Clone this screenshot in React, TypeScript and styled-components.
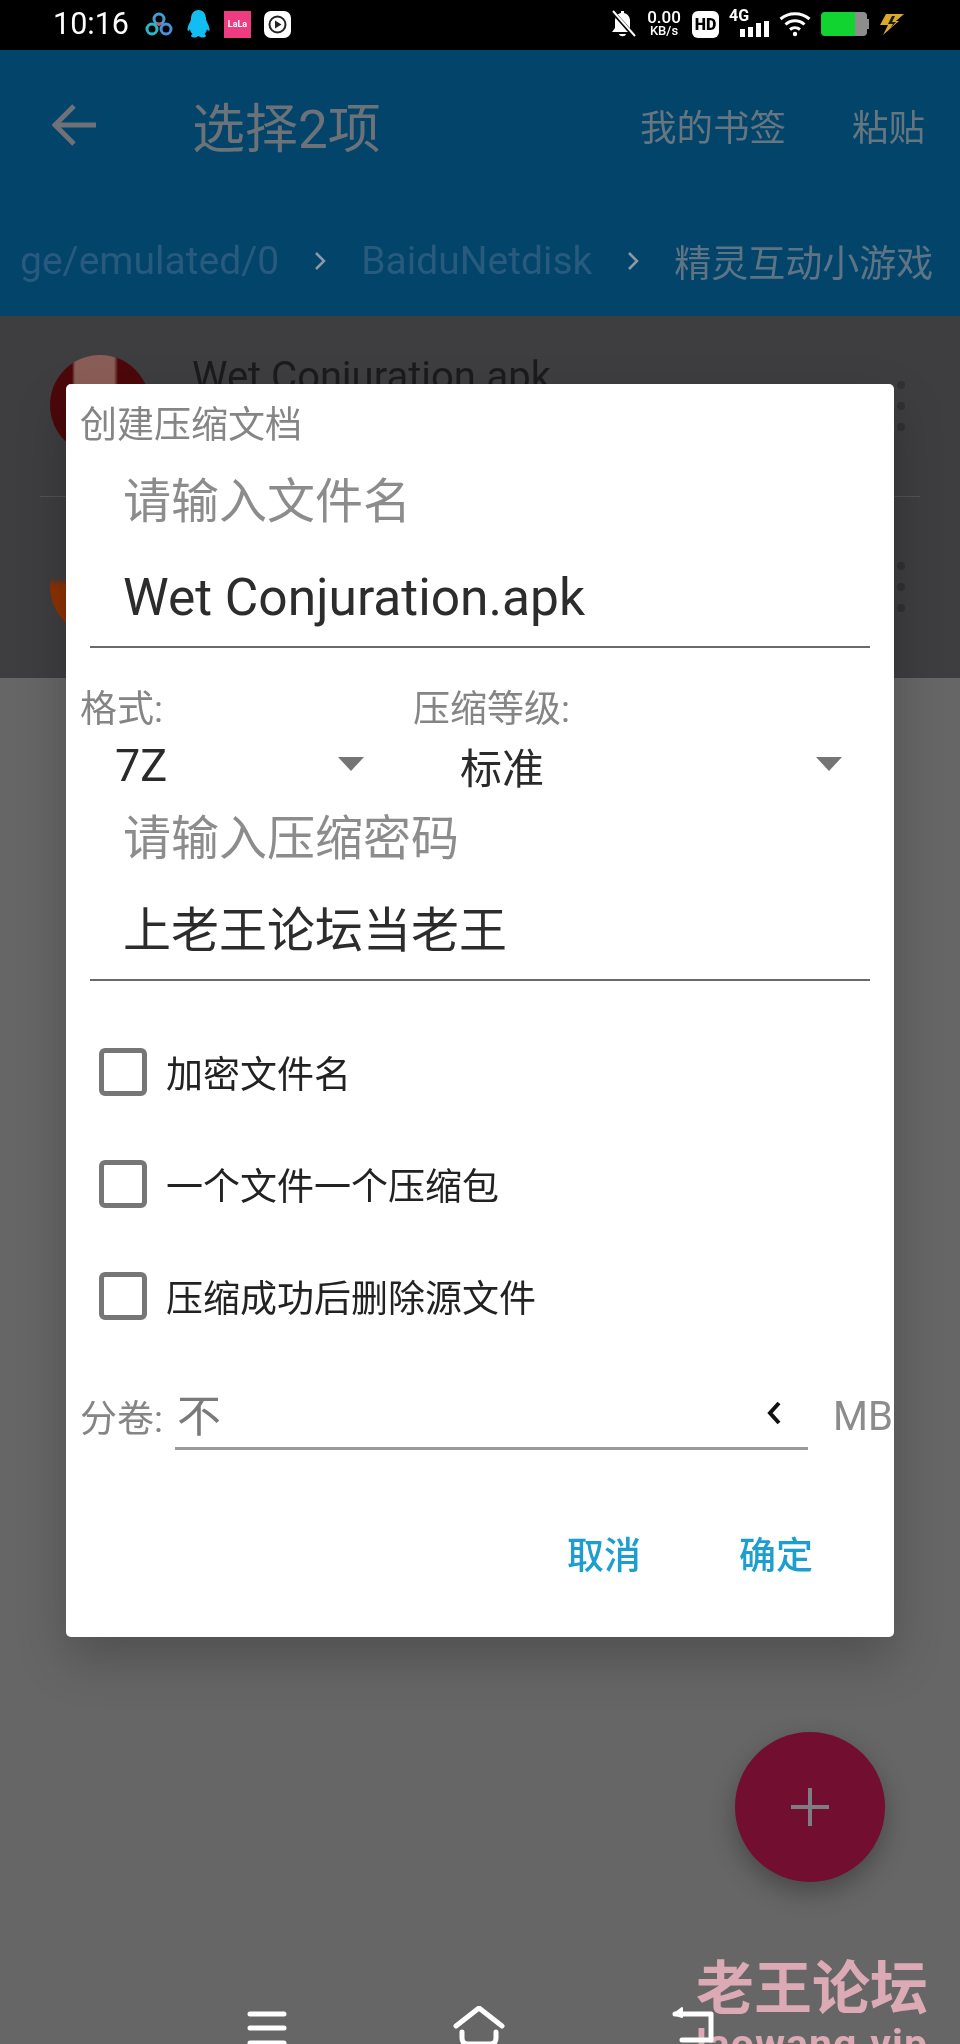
import React from 'react';
import styled, { createGlobalStyle } from 'styled-components';

const FONT = 'Roboto, "Noto Sans CJK SC", sans-serif';

const GlobalStyle = createGlobalStyle`
  html, body {
    margin: 0;
    padding: 0;
    background: #666667;
  }
  * {
    box-sizing: border-box;
  }
`;

// the source is a soft video frame, hence the small blur
const Page = styled.div`
  position: relative;
  width: 960px;
  height: 2044px;
  overflow: hidden;
  background: #666667;
  font-family: ${FONT};
  display: flex;
  flex-direction: column;
  filter: blur(0.5px);
`;

/* status bar */

const StatusBarRow = styled.div`
  height: 50px;
  background: #000;
  color: #fff;
  display: flex;
  align-items: center;
  padding: 0 0 2px 53px;
`;

const Clock = styled.span`
  font-size: 30.5px;
  line-height: 34px;
  width: 92px;
`;

const LeftIcons = styled.div`
  display: flex;
  align-items: center;
  gap: 13px;
`;

const RightIcons = styled.div`
  margin-left: auto;
  margin-right: 55px;
  display: flex;
  align-items: center;
  gap: 10px;
`;

const LalaTile = styled.span`
  width: 27px;
  height: 27px;
  background: #ef3b80;
  color: #fff;
  font-size: 9px;
  font-weight: 700;
  display: flex;
  align-items: center;
  justify-content: center;
`;

const NetSpeed = styled.span`
  width: 36px;
  display: flex;
  flex-direction: column;
  align-items: center;
  font-weight: 500;
  line-height: 14px;
  font-size: 17px;
  small {
    font-size: 13px;
  }
`;

const HdTile = styled.span`
  width: 27px;
  height: 27px;
  border-radius: 6px;
  background: #fff;
  color: #000;
  font-size: 16px;
  font-weight: 900;
  display: flex;
  align-items: center;
  justify-content: center;
`;

const SignalBox = styled.span`
  width: 40px;
  height: 30px;
  display: flex;
  flex-direction: column;
  font-size: 16px;
  font-weight: 700;
  line-height: 14px;
`;

const SignalBars = styled.span`
  align-self: flex-end;
  display: flex;
  align-items: flex-end;
  gap: 3px;
  margin-top: -2px;
`;

const SignalBar = styled.i<{ $h: number }>`
  display: block;
  width: 5px;
  height: ${p => p.$h}px;
  background: #fff;
`;

const Battery = styled.span`
  width: 46px;
  height: 24px;
  border-radius: 4px;
  background: linear-gradient(to right, #12d431 0 74%, #8d8d8d 74% 100%);
`;

const BatteryTip = styled.span`
  width: 2px;
  height: 10px;
  margin-left: -10px;
  background: #8d8d8d;
`;

/* app bar */

const AppBar = styled.div`
  height: 266px;
  background: #03446b;
  display: flex;
  flex-direction: column;
`;

const ToolRow = styled.div`
  height: 150px;
  padding: 0 35px 0 52px;
  display: flex;
  align-items: center;
`;

const ToolTitle = styled.span`
  margin-left: 96px;
  font-size: 53px;
  color: #6d7278;
`;

const ToolAction = styled.span<{ $first?: boolean }>`
  margin-left: ${p => (p.$first ? 'auto' : '66px')};
  font-size: 36.5px;
  color: #66767f;
`;

const Crumbs = styled.div`
  height: 62px;
  margin-top: 30px;
  padding-left: 20px;
  display: flex;
  align-items: center;
  white-space: nowrap;
  font-size: 39px;
`;

const Crumb = styled.span<{ $active?: boolean }>`
  color: ${p => (p.$active ? '#5e7485' : '#285a7d')};
  font-size: ${p => (p.$active ? '37px' : 'inherit')};
`;

const CrumbArrow = styled.svg`
  margin: 0 35px;
  flex: none;
`;

/* file list behind the dialog */

const FileList = styled.div`
  height: 362px;
  background: #3e3d40;
`;

const FileRow = styled.div`
  height: 180px;
  margin: 0 40px;
  padding: 39px 15px 0 10px;
  display: flex;
  gap: 42px;
  & + & {
    border-top: 1.5px solid #525255;
  }
`;

const Avatar = styled.div<{ $kind: 'red' | 'orange' }>`
  width: 100px;
  height: 100px;
  border-radius: 50%;
  flex: none;
  background: ${p =>
    p.$kind === 'red'
      ? 'linear-gradient(90deg, #4c080a 0 22%, #8a5e56 25% 64%, #4c080a 68%)'
      : 'linear-gradient(#3e3d40 0 42%, #8c3200 50% 100%)'};
`;

const FileName = styled.span`
  font-size: 40px;
  line-height: 40px;
  margin-top: 2px;
  color: #1b1b1d;
`;

const RowDots = styled.div`
  margin-left: auto;
  display: flex;
  flex-direction: column;
  gap: 13px;
  margin-top: 26px;
`;

const RowDot = styled.i`
  width: 8px;
  height: 8px;
  border-radius: 50%;
  background: #313133;
`;

/* dialog */

const Dialog = styled.div`
  position: absolute;
  left: 66px;
  top: 384px;
  width: 828px;
  height: 1253px;
  background: #fff;
  border-radius: 5px;
  overflow: hidden;
  padding-top: 21px;
  display: flex;
  flex-direction: column;
`;

const DialogShadow = styled.div`
  position: absolute;
  left: 66px;
  top: 384px;
  width: 828px;
  height: 1253px;
  border-radius: 5px;
  box-shadow: 0 22px 50px rgba(0, 0, 0, 0.22);
`;

const DialogTitle = styled.div`
  margin-left: 14px;
  font-size: 37px;
  line-height: 42px;
  color: #858585;
`;

const Field = styled.div<{ $top: number; $valueGap: number; $bottom: number }>`
  margin: ${p => p.$top}px 24px 0;
  padding: 0 0 ${p => p.$bottom}px 33px;
  border-bottom: 2px solid #6a6a6a;
  display: flex;
  flex-direction: column;
  gap: ${p => p.$valueGap}px;
`;

const Hint = styled.div`
  font-size: 48px;
  line-height: 56px;
  color: #8c8c8c;
`;

const FieldValue = styled.div<{ $latin?: boolean }>`
  font-size: ${p => (p.$latin ? '51.5px' : '48px')};
  line-height: 60px;
  color: #2c2c2c;
`;

const SelectGrid = styled.div`
  margin-top: 42px;
  display: grid;
  grid-template-columns: 333px 1fr;
`;

const SelectCell = styled.div`
  display: flex;
  flex-direction: column;
`;

const SmallLabel = styled.div`
  padding-left: 14px;
  font-size: 37px;
  line-height: 40px;
  color: #858585;
`;

const SelectBox = styled.div<{ $inset: number; $end: number; $size: number }>`
  height: 58px;
  margin-top: 6px;
  padding-left: ${p => p.$inset}px;
  padding-right: ${p => p.$end}px;
  display: flex;
  align-items: center;
  justify-content: space-between;
  font-size: ${p => p.$size}px;
  color: #2a2a2a;
`;

const Caret = styled.i`
  width: 0;
  height: 0;
  border-left: 13.5px solid transparent;
  border-right: 13.5px solid transparent;
  border-top: 14px solid #757575;
  margin-top: -2px;
`;

const Options = styled.div`
  margin-top: 67px;
  padding-left: 33px;
  display: flex;
  flex-direction: column;
  gap: 64px;
`;

const OptionRow = styled.label`
  height: 48px;
  display: flex;
  align-items: center;
  gap: 19px;
  font-size: 37px;
  color: #222;
`;

const CheckBox = styled.span`
  width: 48px;
  height: 48px;
  border: 5px solid #767676;
  border-radius: 6px;
`;

const SplitRow = styled.div`
  margin-top: 62px;
  height: 68px;
  padding-left: 14px;
  display: flex;
  align-items: center;
`;

const SplitLabel = styled.span`
  width: 95px;
  font-size: 37px;
  color: #858585;
`;

const SplitInput = styled.div`
  width: 633px;
  height: 68px;
  padding: 0 25px 4px 2px;
  border-bottom: 3px solid #9a9a9a;
  display: flex;
  align-items: center;
  justify-content: space-between;
  font-size: 44px;
  color: #7a7a7a;
`;

const Unit = styled.span`
  margin-left: 25px;
  font-size: 40px;
  color: #8c8c8c;
  white-space: nowrap;
`;

const Actions = styled.div`
  margin-top: 85px;
  padding-right: 81px;
  display: flex;
  justify-content: flex-end;
  gap: 98px;
`;

const ActionButton = styled.span`
  font-size: 37px;
  line-height: 44px;
  font-weight: 500;
  color: #1c9fd0;
`;

/* floating bits */

const Fab = styled.div`
  position: absolute;
  left: 735px;
  top: 1732px;
  width: 150px;
  height: 150px;
  border-radius: 50%;
  background: #720f30;
  box-shadow: 0 10px 26px rgba(0, 0, 0, 0.3);
  display: flex;
  align-items: center;
  justify-content: center;
`;

const Watermark = styled.div`
  position: absolute;
  left: 696px;
  top: 1954px;
  color: #dbaab5;
  font-weight: 700;
  white-space: nowrap;
`;

const WatermarkTitle = styled.div`
  font-size: 58px;
  line-height: 61px;
  margin-top: 5px;
`;

const WatermarkUrl = styled.div`
  font-size: 41px;
  line-height: 56px;
  letter-spacing: 1px;
  margin-top: -4px;
`;

const NavBar = styled.div`
  position: absolute;
  left: 247px;
  bottom: 0;
  width: 468px;
  height: 38px;
  display: flex;
  justify-content: space-between;
  align-items: flex-start;
`;

const HamburgerSvg = styled.svg`
  margin-top: 5px;
`;

const NetdiskIcon = () => (
  <svg width="28" height="26" viewBox="0 0 28 26" fill="none" strokeWidth="3">
    <circle cx="14" cy="8" r="5" stroke="#3f9fd8" />
    <circle cx="7" cy="18" r="5" stroke="#29b7c9" />
    <circle cx="21" cy="18" r="5" stroke="#4a90d9" />
    <path d="M12 12l2 2 2-2" stroke="#e5484d" strokeWidth="2" />
  </svg>
);

const QqIcon = () => (
  <svg width="25" height="30" viewBox="0 0 25 30" fill="#12bdf2">
    <path d="M12.5 1C7.5 1 5 5 5 10c0 2-3 6-3.500 10-.2 2 .8 2.500 2.500 .5.500 2 1.500 3.500 2.500 4.500-2 1-2 3 1 3.500 2 .3 4-.5 5-1.500 1 1 3 1.800 5 1.500 3-.5 3-2.500 1-3.500 1-1 2-2.500 2.500-4.500 1.700 2 2.700 1.500 2.500-.5C23 16 20 12 20 10c0-5-2.500-9-7.500-9z" />
  </svg>
);

const PlayTileIcon = () => (
  <svg width="27" height="27" viewBox="0 0 27 27">
    <rect width="27" height="27" rx="7" fill="#fff" />
    <circle cx="13.500" cy="13.500" r="8" fill="none" stroke="#222" strokeWidth="2" />
    <path d="M11 9.500l6.500 4-6.500 4z" fill="#222" />
  </svg>
);

const MutedBellIcon = () => (
  <svg width="26" height="28" viewBox="0 0 26 28">
    <path d="M11 1h3v2c4 1 6 4 6 8v8l2 3H2l3-4v-7c0-4 2-7 6-8z" fill="#fff" />
    <path d="M9 24h7c-.5 3-6.500 3-7 0z" fill="#fff" />
    <path d="M2 1l23 26" stroke="#000" strokeWidth="4" />
    <path d="M3 1l22 25" stroke="#fff" strokeWidth="2" />
  </svg>
);

const WifiIcon = () => (
  <svg width="32" height="26" viewBox="0 0 32 26" fill="none" stroke="#fff" strokeWidth="3">
    <path d="M1.500 8C9.500 1 22.500 1 30.500 8" />
    <path d="M6.500 13.500c5.500-5 13.500-5 19 0" />
    <path d="M11 18.500c3-2.500 7-2.500 10 0" />
    <circle cx="16" cy="23" r="2.200" fill="#fff" stroke="none" />
  </svg>
);

const BoltIcon = () => (
  <svg width="26" height="24" viewBox="0 0 26 24">
    <path d="M7 2h18l-8 7h3L4 23l5-10H1z" fill="#d9a92a" />
    <path d="M13 4l-4 8h5l-3 5 6-7h-4l3-6z" fill="#1a1a1a" />
  </svg>
);

const BackArrowIcon = () => (
  <svg width="44" height="42" viewBox="0 0 44 42" fill="none" stroke="#6e7278" strokeWidth="5">
    <path d="M44 21H4" />
    <path d="M22 2L3 21l19 19" />
  </svg>
);

const CrumbChevron = () => (
  <CrumbArrow width="12" height="20" viewBox="0 0 12 20" fill="none" stroke="#8b9aa6" strokeWidth="2.500">
    <path d="M2 2l8 8-8 8" />
  </CrumbArrow>
);

const FabPlus = () => (
  <svg width="40" height="40" viewBox="0 0 40 40" fill="none" stroke="#7f7d84" strokeWidth="4">
    <path d="M20 1v38M1 20h38" />
  </svg>
);

const HamburgerIcon = () => (
  <HamburgerSvg width="40" height="36" viewBox="0 0 40 36" fill="none" stroke="#fff" strokeWidth="5" strokeLinecap="round">
    <path d="M3 3h34M3 17h34M3 32h34" />
  </HamburgerSvg>
);

const HomeIcon = () => (
  <svg width="52" height="38" viewBox="0 0 52 38" fill="none" stroke="#fff" strokeWidth="5" strokeLinecap="round" strokeLinejoin="round">
    <path d="M3 20L26 2l23 18" />
    <path d="M9 26v6c0 4 2 6 6 6h22c4 0 6-2 6-6v-6" />
  </svg>
);

const ReturnIcon = () => (
  <svg width="44" height="38" viewBox="0 0 44 38" fill="none" stroke="#fff" strokeWidth="5" strokeLinejoin="round" strokeLinecap="round">
    <path d="M4 8h36v26H11" />
    <path d="M11 2L3 8l8 3z" fill="#fff" strokeWidth="2" />
  </svg>
);

const ChevronLeftIcon = () => (
  <svg width="18" height="24" viewBox="0 0 18 24" fill="none" stroke="#111" strokeWidth="4">
    <path d="M14 2L5 12l9 10" />
  </svg>
);

const StatusBar = () => (
  <StatusBarRow>
    <Clock>10:16</Clock>
    <LeftIcons>
      <NetdiskIcon />
      <QqIcon />
      <LalaTile>LaLa</LalaTile>
      <PlayTileIcon />
    </LeftIcons>
    <RightIcons>
      <MutedBellIcon />
      <NetSpeed>
        0.00
        <small>KB/s</small>
      </NetSpeed>
      <HdTile>HD</HdTile>
      <SignalBox>
        4G
        <SignalBars>
          {[8, 10, 14, 16].map((h, i) => (
            <SignalBar key={i} $h={h} />
          ))}
        </SignalBars>
      </SignalBox>
      <WifiIcon />
      <Battery />
      <BatteryTip />
      <BoltIcon />
    </RightIcons>
  </StatusBarRow>
);

const Header = () => (
  <AppBar>
    <ToolRow>
      <BackArrowIcon />
      <ToolTitle>选择2项</ToolTitle>
      <ToolAction $first>我的书签</ToolAction>
      <ToolAction>粘贴</ToolAction>
    </ToolRow>
    <Crumbs>
      <Crumb>ge/emulated/0</Crumb>
      <CrumbChevron />
      <Crumb>BaiduNetdisk</Crumb>
      <CrumbChevron />
      <Crumb $active>精灵互动小游戏</Crumb>
    </Crumbs>
  </AppBar>
);

const RowMenu = () => (
  <RowDots>
    <RowDot />
    <RowDot />
    <RowDot />
  </RowDots>
);

const Files = () => (
  <FileList>
    <FileRow>
      <Avatar $kind="red" />
      <FileName>Wet Conjuration.apk</FileName>
      <RowMenu />
    </FileRow>
    <FileRow>
      <Avatar $kind="orange" />
      <RowMenu />
    </FileRow>
  </FileList>
);

const options = ['加密文件名', '一个文件一个压缩包', '压缩成功后删除源文件'];

const ArchiveDialog = () => (
  <Dialog>
    <DialogTitle>创建压缩文档</DialogTitle>
    <Field $top={27} $valueGap={38} $bottom={18}>
      <Hint>请输入文件名</Hint>
      <FieldValue $latin>Wet Conjuration.apk</FieldValue>
    </Field>
    <SelectGrid>
      <SelectCell>
        <SmallLabel>格式:</SmallLabel>
        <SelectBox $inset={49} $end={35} $size={45}>
          7Z
          <Caret />
        </SelectBox>
      </SelectCell>
      <SelectCell>
        <SmallLabel>压缩等级:</SmallLabel>
        <SelectBox $inset={61} $end={52} $size={42}>
          标准
          <Caret />
        </SelectBox>
      </SelectCell>
    </SelectGrid>
    <Field $top={17} $valueGap={34} $bottom={18}>
      <Hint>请输入压缩密码</Hint>
      <FieldValue>上老王论坛当老王</FieldValue>
    </Field>
    <Options>
      {options.map(item => (
        <OptionRow key={item}>
          <CheckBox />
          {item}
        </OptionRow>
      ))}
    </Options>
    <SplitRow>
      <SplitLabel>分卷:</SplitLabel>
      <SplitInput>
        不
        <ChevronLeftIcon />
      </SplitInput>
      <Unit>MB</Unit>
    </SplitRow>
    <Actions>
      <ActionButton>取消</ActionButton>
      <ActionButton>确定</ActionButton>
    </Actions>
  </Dialog>
);

const App = () => (
  <Page>
    <GlobalStyle />
    <StatusBar />
    <Header />
    <Files />
    <DialogShadow />
    <ArchiveDialog />
    <Fab>
      <FabPlus />
    </Fab>
    <Watermark>
      <WatermarkTitle>老王论坛</WatermarkTitle>
      <WatermarkUrl>laowang.vip</WatermarkUrl>
    </Watermark>
    <NavBar>
      <HamburgerIcon />
      <HomeIcon />
      <ReturnIcon />
    </NavBar>
  </Page>
);

export default App;
